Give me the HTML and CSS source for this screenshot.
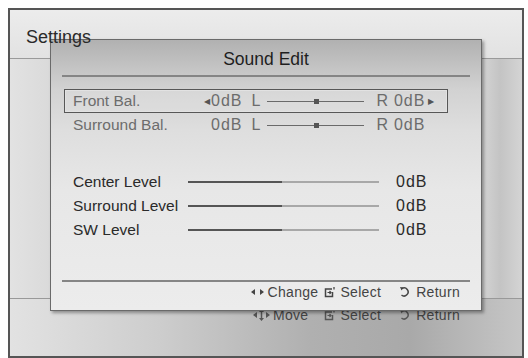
FILE: index.html
```html
<!DOCTYPE html>
<html lang="en">

<head>
    <meta charset="UTF-8">
    <meta name="viewport" content="width=device-width, initial-scale=1.0">
    <title>Sound Edit</title>
    <link rel="stylesheet" href="styles.css">
</head>

<body>
    <div class="screen">
        <div class="top-band"><span class="screen-title">Settings</span></div>
        <div class="middle-band"></div>
        <div class="bottom-band">
            <div class="hints">
                <span class="hint">
                    <svg class="ico-arrows" width="17" height="12" viewBox="0 0 17 12">
                        <path d="M0 6 L4 3 L4 9 Z M17 6 L13 3 L13 9 Z M8.5 0 L6 3 L11 3 Z M8.5 12 L6 9 L11 9 Z" fill="#555" />
                        <path d="M8.5 3 V9" stroke="#555" stroke-width="1.5" />
                    </svg>Move
                </span>
                <span class="hint hint-select wide">
                    <svg class="ico-select" width="12" height="12" viewBox="0 0 12 12">
                        <path d="M8 3 H1.5 V10.5 H8.5 V6" fill="none" stroke="#555" stroke-width="1.5" />
                        <path d="M3.5 6.5 H7 M5.5 5 L7 6.5 L5.5 8" fill="none" stroke="#555" stroke-width="1.2" />
                        <path d="M10 1 V3.5" stroke="#555" stroke-width="1.3" />
                    </svg>Select
                </span>
                <span class="hint hint-return">
                    <svg class="ico-return" width="12" height="12" viewBox="0 0 12 12">
                        <path d="M3 2.5 A4 4 0 1 1 2.5 9" fill="none" stroke="#555" stroke-width="1.5" />
                        <path d="M1 1 L4.5 1.5 L2.5 4.5 Z" fill="#555" />
                    </svg>Return
                </span>
            </div>
        </div>

        <div class="dialog">
            <div class="dialog-title">Sound Edit</div>
            <div class="rule"></div>

            <div class="rows">
                <div class="row bal-row selected">
                    <span class="label">Front Bal.</span>
                    <span class="arrow">&#9664;</span>
                    <span class="db">0dB</span>
                    <span class="side side-l">L</span>
                    <span class="bal-slider"><span class="knob"></span></span>
                    <span class="side side-r">R</span>
                    <span class="db db-r">0dB</span>
                    <span class="arrow arrow-r">&#9654;</span>
                </div>
                <div class="row bal-row">
                    <span class="label">Surround Bal.</span>
                    <span class="arrow off">&#9664;</span>
                    <span class="db">0dB</span>
                    <span class="side side-l">L</span>
                    <span class="bal-slider"><span class="knob"></span></span>
                    <span class="side side-r">R</span>
                    <span class="db db-r">0dB</span>
                </div>

                <div class="row level-row gap-above">
                    <span class="label">Center Level</span>
                    <span class="track"><span class="fill" style="width: 49%"></span></span>
                    <span class="db">0dB</span>
                </div>
                <div class="row level-row">
                    <span class="label">Surround Level</span>
                    <span class="track"><span class="fill" style="width: 49%"></span></span>
                    <span class="db">0dB</span>
                </div>
                <div class="row level-row">
                    <span class="label">SW Level</span>
                    <span class="track"><span class="fill" style="width: 49%"></span></span>
                    <span class="db">0dB</span>
                </div>
            </div>

            <div class="rule rule-bottom"></div>
            <div class="hints dialog-hints">
                <span class="hint">
                    <svg class="ico-lr" width="15" height="10" viewBox="0 0 15 10">
                        <path d="M1 5 L5 2 L5 8 Z M14 5 L10 2 L10 8 Z" fill="#444" />
                    </svg>Change
                </span>
                <span class="hint hint-select">
                    <svg class="ico-select" width="12" height="12" viewBox="0 0 12 12">
                        <path d="M8 3 H1.5 V10.5 H8.5 V6" fill="none" stroke="#444" stroke-width="1.5" />
                        <path d="M3.5 6.5 H7 M5.5 5 L7 6.5 L5.5 8" fill="none" stroke="#444" stroke-width="1.2" />
                        <path d="M10 1 V3.5" stroke="#444" stroke-width="1.3" />
                    </svg>Select
                </span>
                <span class="hint hint-return">
                    <svg class="ico-return" width="12" height="12" viewBox="0 0 12 12">
                        <path d="M3 2.5 A4 4 0 1 1 2.5 9" fill="none" stroke="#444" stroke-width="1.5" />
                        <path d="M1 1 L4.5 1.5 L2.5 4.5 Z" fill="#444" />
                    </svg>Return
                </span>
            </div>
        </div>
    </div>
</body>

</html>
```

FILE: styles.css
```css
* {
    box-sizing: border-box;
}

body {
    margin: 0;
    background-color: #fff;
    font-family: "Liberation Sans", Arial, sans-serif;
}

/* the settings screen behind the popup */
.screen {
    position: relative;
    width: 516px;
    height: 350px;
    margin: 8px 0 0 8px;
    border: 2px solid #555;
    background-color: #e4e4e4;
    overflow: hidden;
}

.top-band {
    height: 49px;
    padding: 17px 0 0 16px;
    font-size: 18px;
    line-height: 20px;
    color: #2a2a2a;
    background: linear-gradient(#ececec, #e2e2e2);
    border-bottom: 1px solid #9a9a9a;
}

/* the title is painted over the popup's top edge */
.screen-title {
    position: relative;
    z-index: 2;
}

.middle-band {
    height: 240px;
    border-bottom: 1px solid #999;
    background: linear-gradient(to right, #e2e2e2 0, #dadada 40px, #d6d6d6 470px, #c4c4c4 490px, #d4d4d4 512px);
}

.bottom-band {
    height: 58px;
    padding: 8px 62px 0 0;
    background: linear-gradient(to right, #e2e2e2 0, #cdcdcd 150px, #b0b0b0 300px, #a9a9a9 400px, #c6c6c6 512px);
}

.hints {
    display: flex;
    justify-content: flex-end;
    font-size: 14px;
    line-height: 16px;
    letter-spacing: 0.3px;
    color: #444;
}

.hint {
    display: flex;
    align-items: center;
}

.hint svg {
    margin-right: 3px;
}

.hint-select {
    margin-left: 6px;
}

.hint-select.wide {
    margin-left: 16px;
}

.hint-select svg {
    margin-right: 4px;
}

.hint-return {
    margin-left: 18px;
}

.hint-return svg {
    margin-right: 5px;
}

/* popup */
.dialog {
    position: absolute;
    left: 40px;
    top: 29px;
    width: 432px;
    height: 272px;
    z-index: 1;
    border: 1px solid #6a6a6a;
    box-shadow: 2px 2px 3px rgba(0, 0, 0, 0.35);
    background: linear-gradient(#b1b1b1 0, #c2c2c2 25px, #d2d2d2 50px, #dedede 90px, #e7e7e7 150px, #ececec);
}

.dialog-title {
    padding: 9px 0 6px;
    font-size: 17.5px;
    line-height: 20px;
    text-align: center;
    color: #1e1e1e;
}

.rule {
    height: 2px;
    margin: 0 11px;
    background-color: #858585;
}

.rows {
    margin: 12px 33px 0 13px;
}

.row {
    display: flex;
    align-items: center;
    height: 24px;
    padding-left: 8px;
    border: 1px solid transparent;
    font-size: 15.5px;
    color: #2a2a2a;
}

.row.selected {
    border-color: #575757;
    box-shadow: inset 0 0 0 1px #e2e2e2;
    background-color: rgba(255, 255, 255, 0.12);
}

.bal-row {
    color: #6c6c6c;
}

.gap-above {
    margin-top: 33px;
}

.label {
    flex: 0 0 131px;
    white-space: nowrap;
}

.arrow {
    width: 7px;
    font-size: 8px;
    color: #555;
}

.arrow.off {
    visibility: hidden;
}

.db {
    font-size: 16px;
    letter-spacing: 1px;
    white-space: nowrap;
}

.side {
    font-size: 16px;
}

.side-l {
    margin-left: 9px;
}

.bal-slider {
    position: relative;
    width: 97px;
    height: 1px;
    margin-left: 7px;
    background-color: #6a6a6a;
}

.knob {
    position: absolute;
    left: 47px;
    top: -2px;
    width: 5px;
    height: 5px;
    background-color: #555;
}

.side-r {
    margin-left: 12px;
}

.db-r {
    margin-left: 6px;
}

.arrow-r {
    margin-left: 3px;
}

.level-row .label {
    flex-basis: 115px;
}

.track {
    width: 191px;
    height: 2px;
    margin-right: 17px;
    background-color: #a8a8a8;
}

.fill {
    display: block;
    height: 100%;
    background-color: #555;
}

.rule-bottom {
    margin-top: 38px;
}

.dialog-hints {
    margin-top: 2px;
    padding-right: 21px;
}
```
